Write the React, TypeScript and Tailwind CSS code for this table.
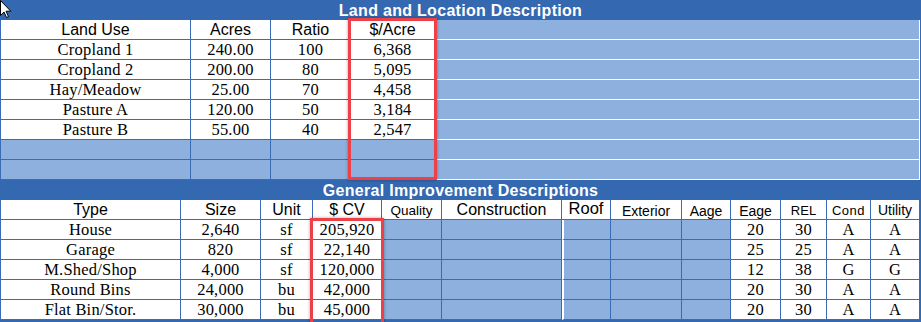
import React from "react"

const landRows = [
  ["Cropland 1", "240.00", "100", "6,368"],
  ["Cropland 2", "200.00", "80", "5,095"],
  ["Hay/Meadow", "25.00", "70", "4,458"],
  ["Pasture A", "120.00", "50", "3,184"],
  ["Pasture B", "55.00", "40", "2,547"],
]

const improvements = [
  ["House", "2,640", "sf", "205,920", "20", "30", "A", "A"],
  ["Garage", "820", "sf", "22,140", "25", "25", "A", "A"],
  ["M.Shed/Shop", "4,000", "sf", "120,000", "12", "38", "G", "G"],
  ["Round Bins", "24,000", "bu", "42,000", "20", "30", "A", "A"],
  ["Flat Bin/Stor.", "30,000", "bu", "45,000", "20", "30", "A", "A"],
]

const cell = "h-[20px] border-r border-b border-[#3a6bb5] flex items-center justify-center overflow-hidden whitespace-nowrap"
const serif = "font-['Liberation_Serif','Times_New_Roman',serif] text-[16.5px] leading-[20px] tracking-[0.2px]"
const head = "text-[16px] leading-[20px]"

export default function App() {
  return (
    <div className="relative w-[921px] h-[322px] overflow-hidden bg-[#3468b0] font-['Liberation_Sans',Arial,sans-serif] text-black">
      {/* Land section */}
      <div className="h-[20px] flex items-center justify-center pt-[1px] text-white font-bold text-[16px] tracking-[0.3px]">
        Land and Location Description
      </div>
      <div className="grid grid-cols-[191px_80px_80px_84px_485px]">
        {/* header */}
        <div className={`${cell} border-l bg-white ${head}`}>Land Use</div>
        <div className={`${cell} bg-white ${head}`}>Acres</div>
        <div className={`${cell} bg-white ${head}`}>Ratio</div>
        <div className={`${cell} bg-white ${head} border-r-white`}>$/Acre</div>
        <div className="h-[20px] bg-[#8db0de] border-r border-b border-white" />

        {landRows.map((r) => (
          <React.Fragment key={r[0]}>
            <div className={`${cell} border-l bg-white ${serif}`}>{r[0]}</div>
            <div className={`${cell} bg-white ${serif}`}>{r[1]}</div>
            <div className={`${cell} bg-white ${serif}`}>{r[2]}</div>
            <div className={`${cell} bg-white ${serif} border-r-white`}>{r[3]}</div>
            <div className="h-[20px] bg-[#8db0de] border-r border-b border-white" />
          </React.Fragment>
        ))}

        {[0, 1].map((i) => (
          <React.Fragment key={i}>
            <div className={`${cell} border-l bg-[#8db0de]`} />
            <div className={`${cell} bg-[#8db0de]`} />
            <div className={`${cell} bg-[#8db0de]`} />
            <div className={`${cell} bg-[#8db0de] border-r-white`} />
            <div className="h-[20px] bg-[#8db0de] border-r border-b border-white" />
          </React.Fragment>
        ))}
      </div>

      {/* Improvements section */}
      <div className="h-[20px] flex items-center justify-center pt-[1px] text-white font-bold text-[16px] tracking-[0.3px]">
        General Improvement Descriptions
      </div>
      <div className="grid grid-cols-[181px_80px_52px_69px_60px_120px_49px_71px_49px_50px_46px_44px_49px]">
        <div className={`${cell} border-l bg-white ${head}`}>Type</div>
        <div className={`${cell} bg-white ${head}`}>Size</div>
        <div className={`${cell} bg-white ${head}`}>Unit</div>
        <div className={`${cell} bg-white ${head}`}>$ CV</div>
        <div className={`${cell} bg-white text-[13.5px] pt-[3px]`}>Quality</div>
        <div className={`${cell} bg-white ${head}`}>Construction</div>
        <div className={`${cell} bg-white text-[16.5px] pb-[2px]`}>Roof</div>
        <div className={`${cell} bg-white text-[14px] pt-[3px]`}>Exterior</div>
        <div className={`${cell} bg-white text-[14px] pt-[3px]`}>Aage</div>
        <div className={`${cell} bg-white text-[14px] pt-[3px]`}>Eage</div>
        <div className={`${cell} bg-white text-[13px] pt-[2px]`}>REL</div>
        <div className={`${cell} bg-white text-[13px] tracking-[0.5px] pt-[2px]`}>Cond</div>
        <div className={`${cell} bg-white text-[14px] pt-[2px]`}>Utility</div>

        {improvements.map((r) => (
          <React.Fragment key={r[0]}>
            <div className={`${cell} border-l bg-white ${serif}`}>{r[0]}</div>
            <div className={`${cell} bg-white ${serif}`}>{r[1]}</div>
            <div className={`${cell} bg-white ${serif}`}>{r[2]}</div>
            <div className={`${cell} bg-white ${serif}`}>{r[3]}</div>
            <div className={`${cell} bg-[#8db0de]`} />
            <div className={`${cell} bg-[#8db0de]`} />
            <div className={`${cell} bg-[#8db0de] border-l-[2px] border-l-white`} />
            <div className={`${cell} bg-[#8db0de]`} />
            <div className={`${cell} bg-[#8db0de]`} />
            <div className={`${cell} bg-white ${serif}`}>{r[4]}</div>
            <div className={`${cell} bg-white ${serif}`}>{r[5]}</div>
            <div className={`${cell} bg-white ${serif}`}>{r[6]}</div>
            <div className={`${cell} bg-white ${serif}`}>{r[7]}</div>
          </React.Fragment>
        ))}
      </div>

      {/* highlight boxes */}
      <div className="absolute left-[348px] top-[18px] w-[89px] h-[162px] border-[3px] border-[#ee4048] shadow-[0_0_3px_rgba(0,0,0,0.35)] pointer-events-none" />
      <div className="absolute left-[310px] top-[218px] w-[74px] h-[110px] border-[3px] border-[#ee4048] shadow-[0_0_3px_rgba(0,0,0,0.35)] pointer-events-none" />

      {/* mouse pointer */}
      <svg className="absolute left-0 top-0" width="12" height="19" viewBox="0 0 12 19">
        <path d="M0.5 0.5 L0.5 15.5 L4 12 L6.5 17.5 L8.5 16.6 L6 11.2 L10.8 11.2 Z" fill="#fff" stroke="#000" strokeWidth="1" />
      </svg>
    </div>
  )
}
